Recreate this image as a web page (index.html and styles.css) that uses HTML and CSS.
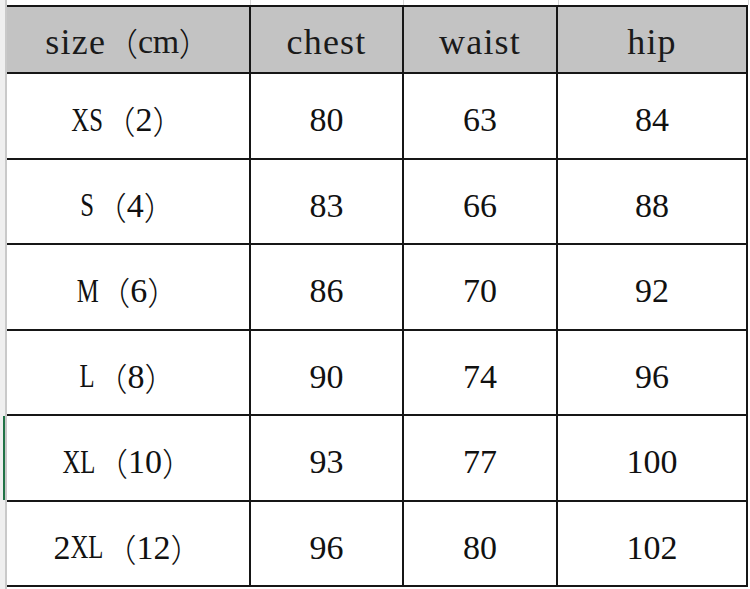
FILE: index.html
```html
<!DOCTYPE html>
<html>
<head>
<meta charset="utf-8">
<link rel="stylesheet" href="styles.css">
</head>
<body>
<div class="sheet">
  <div class="gutter"><div class="mark"></div></div>
  <div class="main">
    <div class="strip">
      <div class="sc"></div><div class="sc"></div><div class="sc"></div><div class="sc"></div>
    </div>
    <div class="grid">
      <div class="cell head"><span class="t">size</span><span class="p">（</span><span class="t cm">cm</span><span class="p">）</span></div>
      <div class="cell head"><span class="t">chest</span></div>
      <div class="cell head"><span class="t">waist</span></div>
      <div class="cell head"><span class="t">hip</span></div>

      <div class="cell"><span class="u u2">XS</span><span class="p">（</span><span class="n">2</span><span class="p">）</span></div>
      <div class="cell"><span class="n">80</span></div>
      <div class="cell"><span class="n">63</span></div>
      <div class="cell"><span class="n">84</span></div>

      <div class="cell"><span class="u u1">S</span><span class="p">（</span><span class="n">4</span><span class="p">）</span></div>
      <div class="cell"><span class="n">83</span></div>
      <div class="cell"><span class="n">66</span></div>
      <div class="cell"><span class="n">88</span></div>

      <div class="cell"><span class="u u1m">M</span><span class="p">（</span><span class="n">6</span><span class="p">）</span></div>
      <div class="cell"><span class="n">86</span></div>
      <div class="cell"><span class="n">70</span></div>
      <div class="cell"><span class="n">92</span></div>

      <div class="cell"><span class="u u1">L</span><span class="p">（</span><span class="n">8</span><span class="p">）</span></div>
      <div class="cell"><span class="n">90</span></div>
      <div class="cell"><span class="n">74</span></div>
      <div class="cell"><span class="n">96</span></div>

      <div class="cell"><span class="u u2">XL</span><span class="p">（</span><span class="n">10</span><span class="p">）</span></div>
      <div class="cell"><span class="n">93</span></div>
      <div class="cell"><span class="n">77</span></div>
      <div class="cell"><span class="n">100</span></div>

      <div class="cell"><span class="n">2</span><span class="u u2">XL</span><span class="p">（</span><span class="n">12</span><span class="p">）</span></div>
      <div class="cell"><span class="n">96</span></div>
      <div class="cell"><span class="n">80</span></div>
      <div class="cell"><span class="n">102</span></div>
    </div>
  </div>
</div>
</body>
</html>
```

FILE: styles.css
```css
html, body {
  margin: 0;
  padding: 0;
  background: #ffffff;
}

.sheet {
  display: flex;
  width: 750px;
  height: 589px;
  overflow: hidden;
}

.gutter {
  width: 5px;
  flex: none;
  background: #efefef;
  border-right: 2px solid #c9c9c9;
  position: relative;
}

.mark {
  position: absolute;
  left: 3px;
  top: 416px;
  width: 2px;
  height: 84px;
  background: #217346;
}

.main {
  flex: none;
  width: 743px;
  display: flex;
  flex-direction: column;
}

.strip {
  height: 5px;
  display: grid;
  grid-template-columns: 244px 153px 155px 190px;
}

.sc {
  border-right: 1px solid #d6d6d6;
}

.grid {
  display: grid;
  grid-template-columns: 242px 151px 152px 188px;
  grid-template-rows: 65px 84px 83px 84px 83px 84px 83px;
  gap: 2px;
  background: #161616;
  padding: 2px 2px 2px 0;
  width: max-content;
}

.cell {
  background: #ffffff;
  display: flex;
  align-items: center;
  justify-content: center;
  padding-top: 8px;
  box-sizing: border-box;
  color: #111111;
  white-space: nowrap;
  line-height: 1;
  font-family: "Liberation Serif", serif;
}

.cell.head {
  background: #c3c3c3;
  padding-top: 4px;
}

.t {
  font-family: "Liberation Serif", serif;
  font-size: 36px;
  letter-spacing: 1.2px;
  color: #1a1a1a;
}

.t.cm {
  font-size: 34px;
  letter-spacing: -0.5px;
}

.u {
  display: inline-block;
  font-family: "Liberation Serif", serif;
  font-size: 33px;
  transform: scaleX(0.75);
}

.u2 {
  margin: 0 -5px;
}

.u1 {
  margin: 0 -2px;
}

.u1m {
  margin: 0 -4px;
}

.n {
  font-family: "Liberation Serif", serif;
  font-size: 34px;
}

.p {
  font-family: "Noto Sans CJK SC", sans-serif;
  font-size: 32px;
  font-weight: 300;
}
```
